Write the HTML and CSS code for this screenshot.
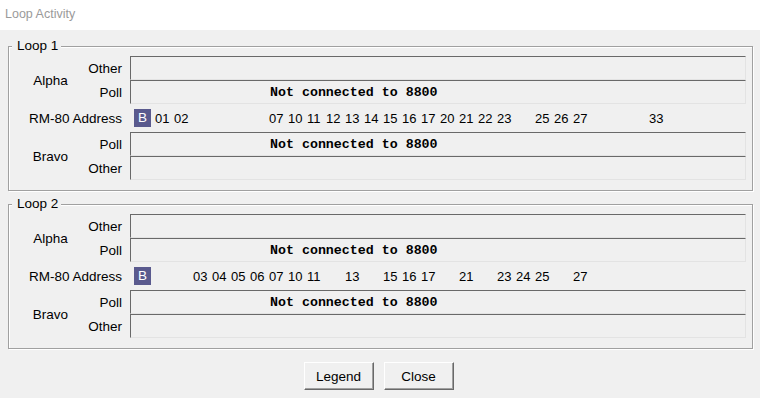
FILE: index.html
```html
<!DOCTYPE html>
<html lang="en">
<head>
    <meta charset="UTF-8">
    <meta name="viewport" content="width=device-width, initial-scale=1.0">
    <title>Loop Activity</title>
    <link rel="stylesheet" href="styles.css">
</head>
<body>
    <div class="titlebar">Loop Activity</div>

    <div class="content">
        <div class="group">
            <div class="group-title">Loop 1</div>
            <div class="loop-grid">
                <div class="name">Alpha</div>
                <div class="sub">Other</div>
                <div class="field"></div>
                <div class="sub">Poll</div>
                <div class="field"><span class="status">Not connected to 8800</span></div>

                <div class="addr-label">RM-80 Address</div>
                <div class="addrs">
                    <span class="bus">B</span>
                    <span class="addr">01</span><span class="addr">02</span><span class="addr"></span><span class="addr"></span><span class="addr"></span><span class="addr"></span><span class="addr">07</span>
                    <span class="addr">10</span><span class="addr">11</span><span class="addr">12</span><span class="addr">13</span><span class="addr">14</span><span class="addr">15</span><span class="addr">16</span><span class="addr">17</span>
                    <span class="addr">20</span><span class="addr">21</span><span class="addr">22</span><span class="addr">23</span><span class="addr"></span><span class="addr">25</span><span class="addr">26</span><span class="addr">27</span>
                    <span class="addr"></span><span class="addr"></span><span class="addr"></span><span class="addr">33</span>
                </div>

                <div class="name">Bravo</div>
                <div class="sub">Poll</div>
                <div class="field"><span class="status">Not connected to 8800</span></div>
                <div class="sub">Other</div>
                <div class="field"></div>
            </div>
        </div>

        <div class="group">
            <div class="group-title">Loop 2</div>
            <div class="loop-grid">
                <div class="name">Alpha</div>
                <div class="sub">Other</div>
                <div class="field"></div>
                <div class="sub">Poll</div>
                <div class="field"><span class="status">Not connected to 8800</span></div>

                <div class="addr-label">RM-80 Address</div>
                <div class="addrs">
                    <span class="bus">B</span>
                    <span class="addr"></span><span class="addr"></span><span class="addr">03</span><span class="addr">04</span><span class="addr">05</span><span class="addr">06</span><span class="addr">07</span>
                    <span class="addr">10</span><span class="addr">11</span><span class="addr"></span><span class="addr">13</span><span class="addr"></span><span class="addr">15</span><span class="addr">16</span><span class="addr">17</span>
                    <span class="addr"></span><span class="addr">21</span><span class="addr"></span><span class="addr">23</span><span class="addr">24</span><span class="addr">25</span><span class="addr"></span><span class="addr">27</span>
                </div>

                <div class="name">Bravo</div>
                <div class="sub">Poll</div>
                <div class="field"><span class="status">Not connected to 8800</span></div>
                <div class="sub">Other</div>
                <div class="field"></div>
            </div>
        </div>

        <div class="buttons">
            <button class="btn">Legend</button>
            <button class="btn">Close</button>
        </div>
    </div>
</body>
</html>
```

FILE: styles.css
```css
body {
    margin: 0;
    background: #f0f0f0;
    font-family: 'Liberation Sans', Arial, sans-serif;
    font-size: 13.5px;
    color: #000;
}

.titlebar {
    height: 30px;
    line-height: 29px;
    padding-left: 5px;
    background: #fff;
    color: #9a9a9a;
    font-size: 12.5px;
}

.content {
    padding: 16px 7px 0 8px;
}

/* Etched group box */
.group {
    border: 1px solid #a0a0a0;
    box-shadow: inset 1px 1px #fff, 1px 1px #fff;
    padding: 0 6px 10px 7px;
    margin-bottom: 13px;
}

.group-title {
    width: fit-content;
    line-height: 16px;
    margin: -9px 0 2px -4px;
    padding: 0 3px 0 5px;
    background: #f0f0f0;
}

.loop-grid {
    display: grid;
    grid-template-columns: 69px 45px 1fr;
    grid-template-rows: 24px 24px 28px 24px 24px;
    align-items: center;
}

.name {
    grid-row: span 2;
    text-align: center;
}

.sub,
.addr-label {
    text-align: right;
    padding-right: 8px;
}

.addr-label {
    grid-column: 1 / 3;
}

.field {
    align-self: stretch;
    box-sizing: border-box;
    border-top: 1px solid #696969;
    border-left: 1px solid #696969;
    border-right: 1px solid #e3e3e3;
    border-bottom: 1px solid #e3e3e3;
    display: flex;
    align-items: center;
}

.status {
    padding-left: 139px;
    font-family: 'Liberation Mono', 'Courier New', monospace;
    font-weight: bold;
    font-size: 13.3px;
}

.addrs {
    display: flex;
    align-items: center;
    padding-left: 4px;
    font-size: 13px;
}

.bus {
    width: 17px;
    height: 18px;
    line-height: 18px;
    margin-right: 2px;
    text-align: center;
    background: #5a5a8e;
    color: #fff;
    font-size: 13.5px;
}

.addr {
    width: 19px;
    padding-left: 2px;
    box-sizing: border-box;
    flex-shrink: 0;
}

.buttons {
    display: flex;
    justify-content: center;
    gap: 10px;
    padding-right: 4px;
}

.btn {
    width: 70px;
    height: 28px;
    padding: 0;
    font-family: 'Liberation Sans', Arial, sans-serif;
    font-size: 13.5px;
    color: #000;
    background: #f0f0f0;
    border-top: 1px solid #fff;
    border-left: 1px solid #fff;
    border-right: 1px solid #696969;
    border-bottom: 1px solid #696969;
    box-shadow: inset -1px -1px #a0a0a0;
}
```
